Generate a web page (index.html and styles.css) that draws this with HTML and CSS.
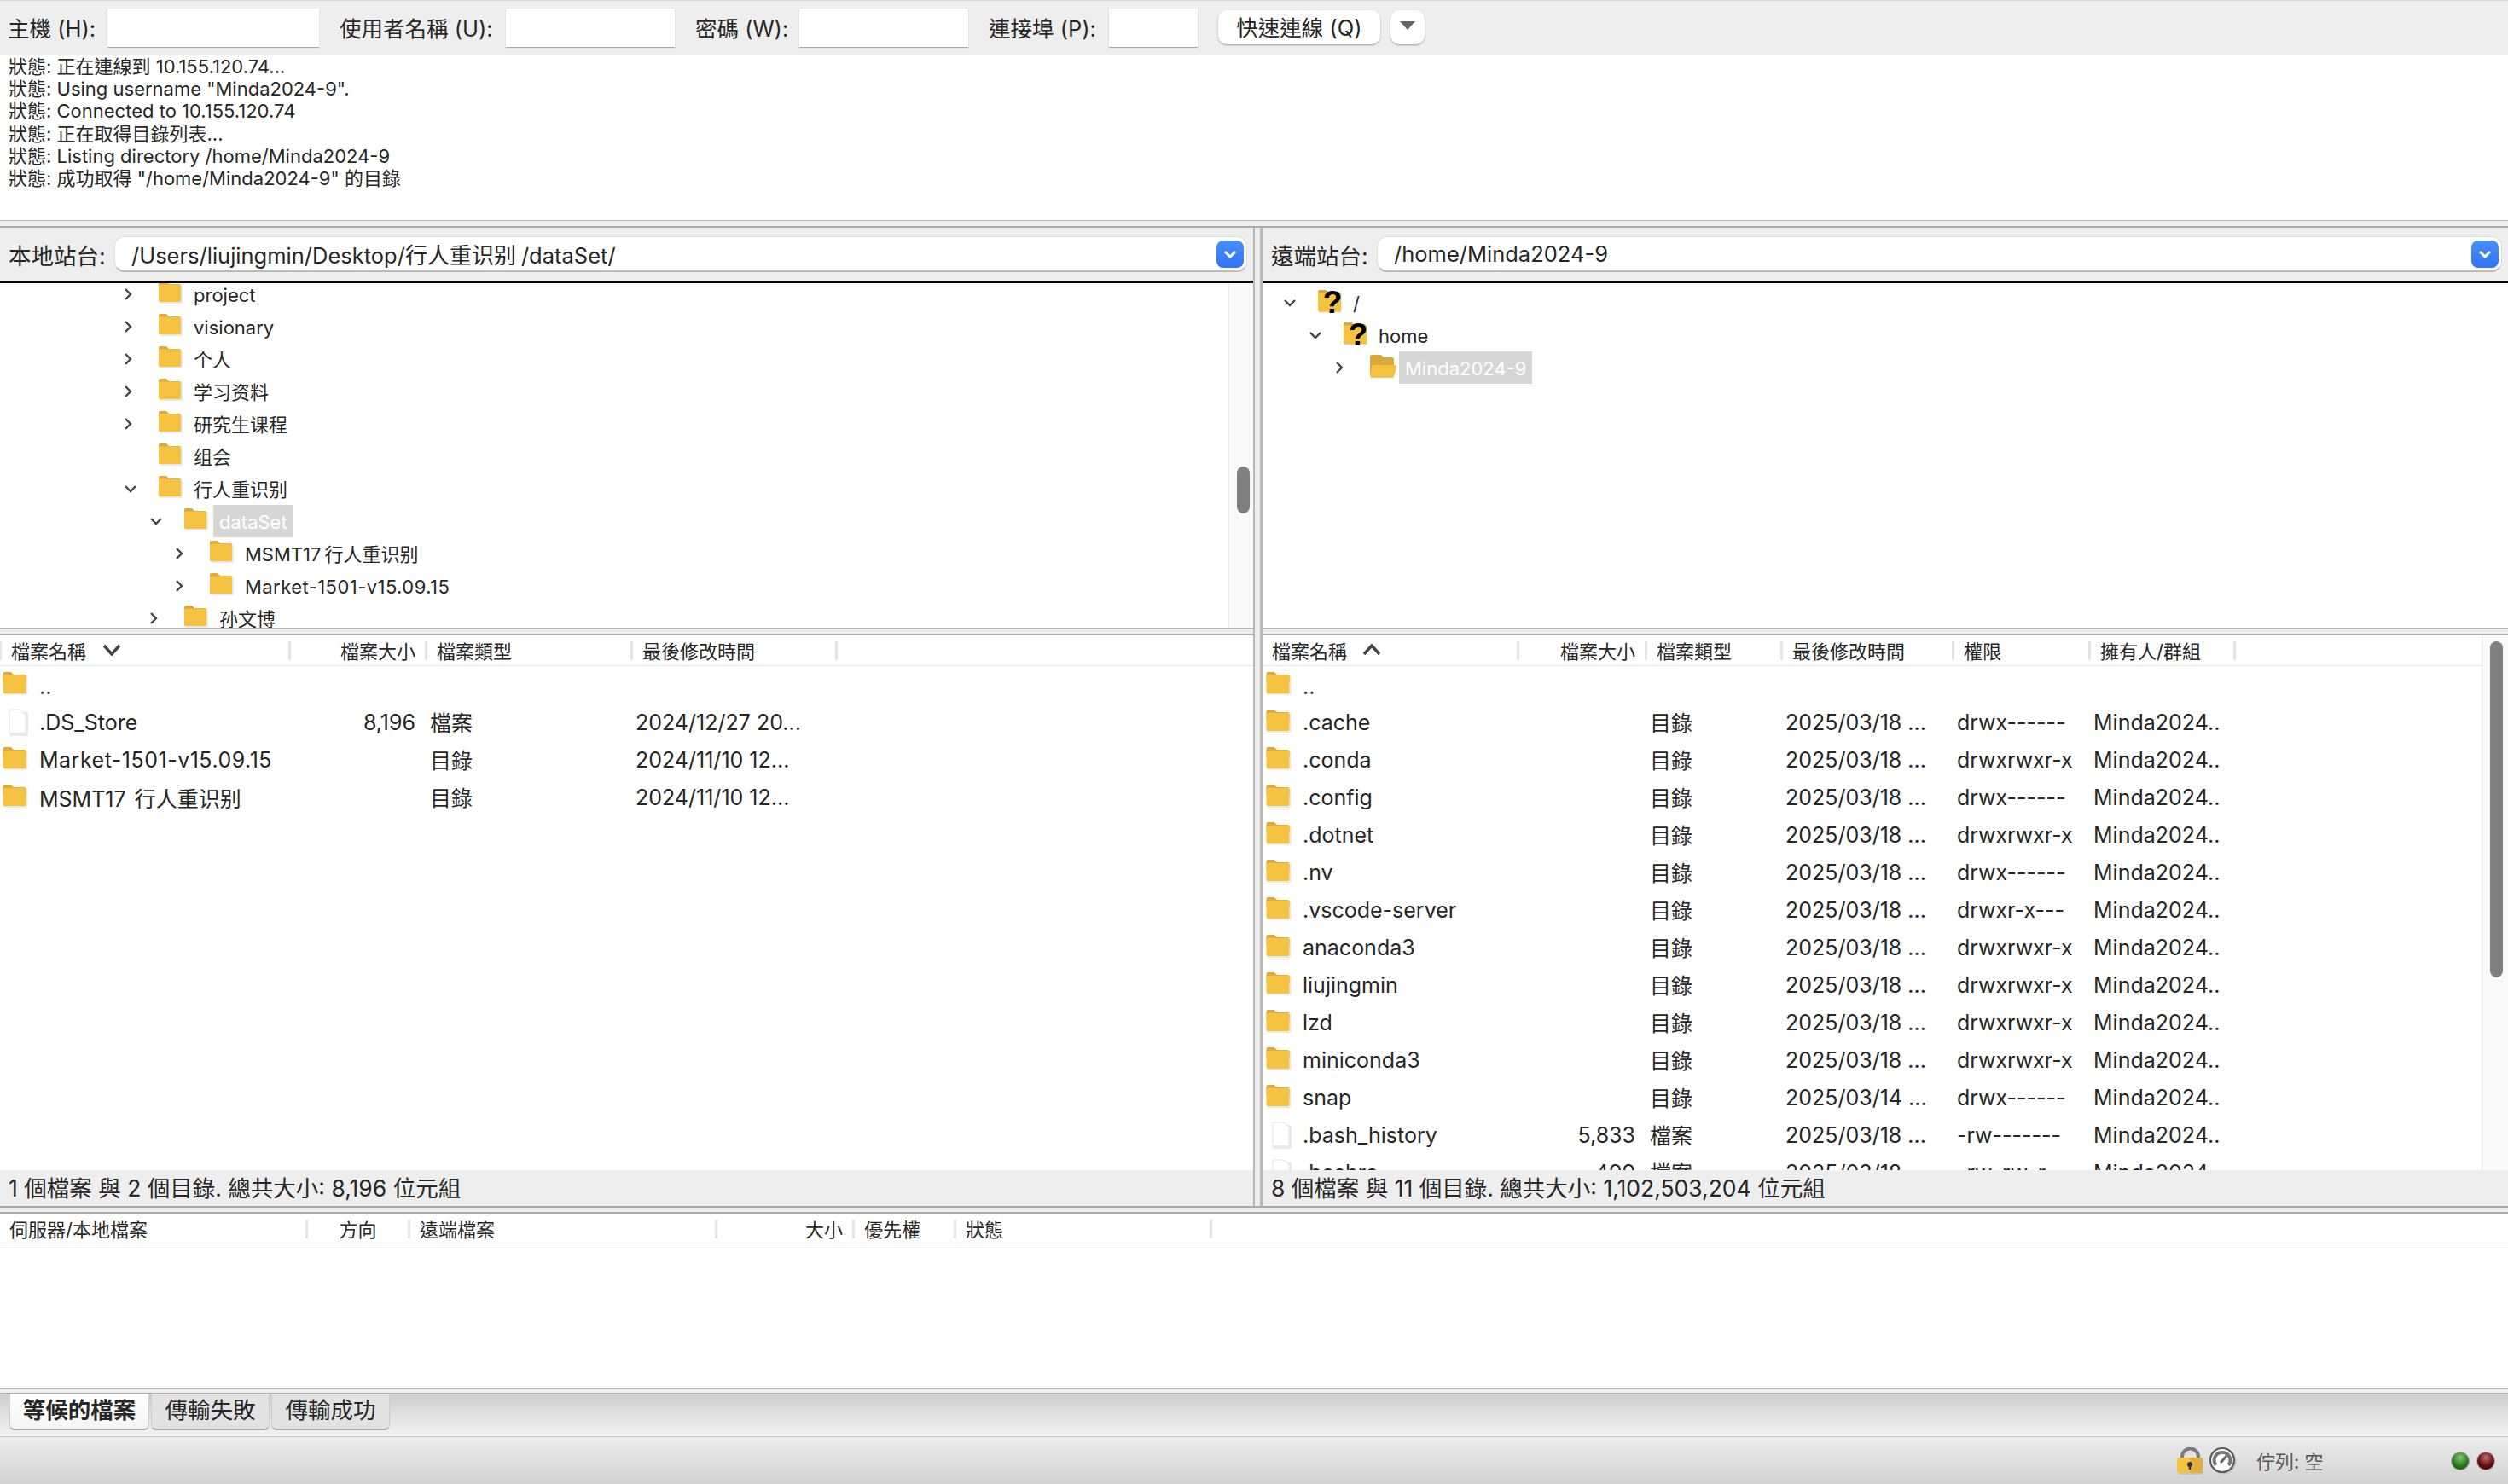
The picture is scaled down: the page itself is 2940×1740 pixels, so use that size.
FILE: index.html
```html
<!DOCTYPE html>
<html lang="zh-Hant">
<head>
    <meta charset="UTF-8">
    <title>FileZilla</title>
    <link rel="stylesheet" href="styles.css">
</head>
<body>
    <svg class="defs" width="0" height="0">
        <symbol id="folder" viewBox="0 0 28 26">
            <rect x="1" y="4" width="27" height="22" rx="2" fill="#e8e8e8"/>
            <path d="M0 2a2 2 0 0 1 2-2h7l3 3h12a2 2 0 0 1 2 2v6H0z" fill="#dcaa3c"/>
            <rect x="0" y="3.5" width="26" height="20.5" rx="1.5" fill="#f5c242"/>
        </symbol>
        <symbol id="folder-open" viewBox="0 0 32 27">
            <path d="M0 2a2 2 0 0 1 2-2h11l3 3h10a2 2 0 0 1 2 2v18H0z" fill="#dcaa3c"/>
            <path d="M2 14a2 2 0 0 1 2-2h26a1.500 1.500 0 0 1 1.500 2L28 25a2 2 0 0 1-2 2H2a2 2 0 0 1-2-2z" fill="#f5c242"/>
        </symbol>
        <symbol id="folder-unknown" viewBox="0 0 28 30">
            <rect x="1" y="4" width="27" height="24" rx="2" fill="#e8e8e8"/>
            <path d="M0 3a2 2 0 0 1 2-2h7l3 2h12a2 2 0 0 1 2 2v6H0z" fill="#dcaa3c"/>
            <rect x="0" y="4.500" width="27" height="22" rx="1.500" fill="#f5c242"/>
            <text x="17" y="28" class="unknown-mark">?</text>
        </symbol>
        <symbol id="file" viewBox="0 0 24 32">
            <rect x="2" y="4" width="22" height="28" rx="2" fill="#e8e8e8"/>
            <path d="M2 2.500A1.500 1.500 0 0 1 3.500 1H15l6 6v20a1.500 1.500 0 0 1-1.500 1.500h-16A1.500 1.500 0 0 1 2 27z" fill="#fff" stroke="#ececec" stroke-width="1.500"/>
        </symbol>
        <symbol id="chev-right" viewBox="0 0 10 16">
            <path d="M2 2l6 6-6 6" fill="none" stroke="#444" stroke-width="2.400"/>
        </symbol>
        <symbol id="chev-down" viewBox="0 0 16 10">
            <path d="M2 2l6 6 6-6" fill="none" stroke="#444" stroke-width="2.400"/>
        </symbol>
    </svg>

    <div class="toolbar">
        <label class="tb-label first">主機 (H):</label>
        <div class="tb-input"></div>
        <label class="tb-label">使用者名稱 (U):</label>
        <div class="tb-input"></div>
        <label class="tb-label">密碼 (W):</label>
        <div class="tb-input"></div>
        <label class="tb-label">連接埠 (P):</label>
        <div class="tb-input"></div>
        <div></div>
        <button class="tb-btn">快速連線 (Q)</button>
        <div></div>
        <button class="tb-btn"><span class="caret"></span></button>
    </div>

    <div class="log">
        <div>狀態: 正在連線到 10.155.120.74...</div>
        <div>狀態: Using username "Minda2024-9".</div>
        <div>狀態: Connected to 10.155.120.74</div>
        <div>狀態: 正在取得目錄列表...</div>
        <div>狀態: Listing directory /home/Minda2024-9</div>
        <div>狀態: 成功取得 "/home/Minda2024-9" 的目錄</div>
    </div>
    <div class="hsash"></div>

    <div class="panes">
        <div class="pane pane-local">
            <div class="sitebar">
                <span class="site-label">本地站台:</span>
                <div class="combo">
                    <span class="combo-text sc">/Users/liujingmin/Desktop/<span class="cjk-run">行人重识别</span>/dataSet/</span>
                    <span class="combo-btn"><svg width="16" height="10" viewBox="0 0 16 10"><path d="M2 2l6 6 6-6" fill="none" stroke="#fff" stroke-width="3"/></svg></span>
                </div>
            </div>
            <div class="tree">
                <div class="tree-rows scrolled sc">
                    <div class="tree-row lvl0"><svg class="chev-r"><use href="#chev-right"/></svg><svg class="tree-icon"><use href="#folder"/></svg><span class="tree-name">project</span></div>
                    <div class="tree-row lvl0"><svg class="chev-r"><use href="#chev-right"/></svg><svg class="tree-icon"><use href="#folder"/></svg><span class="tree-name">visionary</span></div>
                    <div class="tree-row lvl0"><svg class="chev-r"><use href="#chev-right"/></svg><svg class="tree-icon"><use href="#folder"/></svg><span class="tree-name">个人</span></div>
                    <div class="tree-row lvl0"><svg class="chev-r"><use href="#chev-right"/></svg><svg class="tree-icon"><use href="#folder"/></svg><span class="tree-name">学习资料</span></div>
                    <div class="tree-row lvl0"><svg class="chev-r"><use href="#chev-right"/></svg><svg class="tree-icon"><use href="#folder"/></svg><span class="tree-name">研究生课程</span></div>
                    <div class="tree-row lvl0 no-chev"><svg class="tree-icon"><use href="#folder"/></svg><span class="tree-name">组会</span></div>
                    <div class="tree-row lvl0"><svg class="chev-d"><use href="#chev-down"/></svg><svg class="tree-icon"><use href="#folder"/></svg><span class="tree-name">行人重识别</span></div>
                    <div class="tree-row lvl1"><svg class="chev-d"><use href="#chev-down"/></svg><svg class="tree-icon"><use href="#folder"/></svg><span class="tree-name selected">dataSet</span></div>
                    <div class="tree-row lvl2"><svg class="chev-r"><use href="#chev-right"/></svg><svg class="tree-icon"><use href="#folder"/></svg><span class="tree-name">MSMT17<span class="cjk-gap">行人重识别</span></span></div>
                    <div class="tree-row lvl2"><svg class="chev-r"><use href="#chev-right"/></svg><svg class="tree-icon"><use href="#folder"/></svg><span class="tree-name spaced">Market-1501-v15.09.15</span></div>
                    <div class="tree-row lvl1"><svg class="chev-r"><use href="#chev-right"/></svg><svg class="tree-icon"><use href="#folder"/></svg><span class="tree-name">孙文博</span></div>
                </div>
                <div class="scroll-track tree-track"><div class="scroll-thumb tree-thumb"></div></div>
            </div>
            <div class="hsash"></div>
            <div class="list">
                <div class="list-main">
                    <div class="list-head local-cols">
                        <div class="hcell first-col">檔案名稱<svg class="sort-icon" viewBox="0 0 24 14"><path d="M3 2l9 10 9-10" fill="none" stroke="#444" stroke-width="3.500"/></svg></div>
                        <div class="hcell right">檔案大小</div>
                        <div class="hcell">檔案類型</div>
                        <div class="hcell">最後修改時間</div>
                    </div>
                    <div class="list-rows">
                        <div class="list-row local-cols"><div class="cell name"><svg class="list-icon"><use href="#folder"/></svg><span class="dots">..</span></div></div>
                        <div class="list-row local-cols"><div class="cell name"><svg class="file-icon"><use href="#file"/></svg>.DS_Store</div><div class="cell right">8,196</div><div class="cell">檔案</div><div class="cell">2024/12/27 20...</div></div>
                        <div class="list-row local-cols"><div class="cell name"><svg class="list-icon"><use href="#folder"/></svg><span class="spaced">Market-1501-v15.09.15</span></div><div class="cell right"></div><div class="cell">目錄</div><div class="cell">2024/11/10 12...</div></div>
                        <div class="list-row local-cols"><div class="cell name"><svg class="list-icon"><use href="#folder"/></svg><span class="sc">MSMT17<span class="cjk-gap wide">行人重识别</span></span></div><div class="cell right"></div><div class="cell">目錄</div><div class="cell">2024/11/10 12...</div></div>
                    </div>
                </div>
            </div>
            <div class="pane-status">1 個檔案 與 2 個目錄. 總共大小: 8,196 位元組</div>
        </div>

        <div class="vsash"></div>

        <div class="pane pane-remote">
            <div class="sitebar">
                <span class="site-label">遠端站台:</span>
                <div class="combo">
                    <span class="combo-text">/home/Minda2024-9</span>
                    <span class="combo-btn"><svg width="16" height="10" viewBox="0 0 16 10"><path d="M2 2l6 6 6-6" fill="none" stroke="#fff" stroke-width="3"/></svg></span>
                </div>
            </div>
            <div class="tree">
                <div class="tree-rows">
                    <div class="tree-row lvl0"><svg class="chev-d"><use href="#chev-down"/></svg><svg class="tree-icon unknown"><use href="#folder-unknown"/></svg><span class="tree-name">/</span></div>
                    <div class="tree-row lvl1"><svg class="chev-d"><use href="#chev-down"/></svg><svg class="tree-icon unknown"><use href="#folder-unknown"/></svg><span class="tree-name">home</span></div>
                    <div class="tree-row lvl2"><svg class="chev-r"><use href="#chev-right"/></svg><svg class="tree-icon open"><use href="#folder-open"/></svg><span class="tree-name selected">Minda2024-9</span></div>
                </div>
            </div>
            <div class="hsash"></div>
            <div class="list">
                <div class="list-main">
                    <div class="list-head remote-cols">
                        <div class="hcell first-col">檔案名稱<svg class="sort-icon" viewBox="0 0 24 14"><path d="M3 12l9-10 9 10" fill="none" stroke="#444" stroke-width="3.500"/></svg></div>
                        <div class="hcell right">檔案大小</div>
                        <div class="hcell">檔案類型</div>
                        <div class="hcell">最後修改時間</div>
                        <div class="hcell">權限</div>
                        <div class="hcell">擁有人/群組</div>
                    </div>
                    <div class="list-rows">
                        <div class="list-row remote-cols"><div class="cell name"><svg class="list-icon"><use href="#folder"/></svg><span class="dots">..</span></div></div>
                        <div class="list-row remote-cols"><div class="cell name"><svg class="list-icon"><use href="#folder"/></svg>.cache</div><div class="cell right"></div><div class="cell">目錄</div><div class="cell">2025/03/18 ...</div><div class="cell">drwx------</div><div class="cell">Minda2024..</div></div>
                        <div class="list-row remote-cols"><div class="cell name"><svg class="list-icon"><use href="#folder"/></svg>.conda</div><div class="cell right"></div><div class="cell">目錄</div><div class="cell">2025/03/18 ...</div><div class="cell">drwxrwxr-x</div><div class="cell">Minda2024..</div></div>
                        <div class="list-row remote-cols"><div class="cell name"><svg class="list-icon"><use href="#folder"/></svg>.config</div><div class="cell right"></div><div class="cell">目錄</div><div class="cell">2025/03/18 ...</div><div class="cell">drwx------</div><div class="cell">Minda2024..</div></div>
                        <div class="list-row remote-cols"><div class="cell name"><svg class="list-icon"><use href="#folder"/></svg>.dotnet</div><div class="cell right"></div><div class="cell">目錄</div><div class="cell">2025/03/18 ...</div><div class="cell">drwxrwxr-x</div><div class="cell">Minda2024..</div></div>
                        <div class="list-row remote-cols"><div class="cell name"><svg class="list-icon"><use href="#folder"/></svg>.nv</div><div class="cell right"></div><div class="cell">目錄</div><div class="cell">2025/03/18 ...</div><div class="cell">drwx------</div><div class="cell">Minda2024..</div></div>
                        <div class="list-row remote-cols"><div class="cell name"><svg class="list-icon"><use href="#folder"/></svg>.vscode-server</div><div class="cell right"></div><div class="cell">目錄</div><div class="cell">2025/03/18 ...</div><div class="cell">drwxr-x---</div><div class="cell">Minda2024..</div></div>
                        <div class="list-row remote-cols"><div class="cell name"><svg class="list-icon"><use href="#folder"/></svg>anaconda3</div><div class="cell right"></div><div class="cell">目錄</div><div class="cell">2025/03/18 ...</div><div class="cell">drwxrwxr-x</div><div class="cell">Minda2024..</div></div>
                        <div class="list-row remote-cols"><div class="cell name"><svg class="list-icon"><use href="#folder"/></svg>liujingmin</div><div class="cell right"></div><div class="cell">目錄</div><div class="cell">2025/03/18 ...</div><div class="cell">drwxrwxr-x</div><div class="cell">Minda2024..</div></div>
                        <div class="list-row remote-cols"><div class="cell name"><svg class="list-icon"><use href="#folder"/></svg>lzd</div><div class="cell right"></div><div class="cell">目錄</div><div class="cell">2025/03/18 ...</div><div class="cell">drwxrwxr-x</div><div class="cell">Minda2024..</div></div>
                        <div class="list-row remote-cols"><div class="cell name"><svg class="list-icon"><use href="#folder"/></svg>miniconda3</div><div class="cell right"></div><div class="cell">目錄</div><div class="cell">2025/03/18 ...</div><div class="cell">drwxrwxr-x</div><div class="cell">Minda2024..</div></div>
                        <div class="list-row remote-cols"><div class="cell name"><svg class="list-icon"><use href="#folder"/></svg>snap</div><div class="cell right"></div><div class="cell">目錄</div><div class="cell">2025/03/14 ...</div><div class="cell">drwx------</div><div class="cell">Minda2024..</div></div>
                        <div class="list-row remote-cols"><div class="cell name"><svg class="file-icon"><use href="#file"/></svg>.bash_history</div><div class="cell right">5,833</div><div class="cell">檔案</div><div class="cell">2025/03/18 ...</div><div class="cell">-rw-------</div><div class="cell">Minda2024..</div></div>
                        <div class="list-row remote-cols"><div class="cell name"><svg class="file-icon"><use href="#file"/></svg>.bashrc</div><div class="cell right">499</div><div class="cell">檔案</div><div class="cell">2025/03/18 ...</div><div class="cell">-rw-rw-r--</div><div class="cell">Minda2024..</div></div>
                    </div>
                </div>
                <div class="scroll-track list-track"><div class="scroll-thumb list-thumb"></div></div>
            </div>
            <div class="pane-status">8 個檔案 與 11 個目錄. 總共大小: 1,102,503,204 位元組</div>
        </div>
    </div>
    <div class="hsash thick-top"></div>

    <div class="queue">
        <div class="list-head queue-cols">
            <div class="hcell">伺服器/本地檔案</div>
            <div class="hcell center">方向</div>
            <div class="hcell">遠端檔案</div>
            <div class="hcell right">大小</div>
            <div class="hcell">優先權</div>
            <div class="hcell">狀態</div>
        </div>
    </div>
    <div class="hsash short"></div>

    <div class="tabs">
        <div class="tab active">等候的檔案</div>
        <div class="tab">傳輸失敗</div>
        <div class="tab">傳輸成功</div>
    </div>

    <div class="statusbar">
        <svg class="lock" viewBox="0 0 31 32">
            <rect x="2" y="14" width="29" height="18" rx="2" fill="#c4c4c4"/>
            <path d="M6 14V11a9.500 9.500 0 0 1 19 0v3" fill="none" stroke="#7b7b7b" stroke-width="4"/>
            <rect x="0" y="12" width="30" height="18" rx="2" fill="#f5c242"/>
            <path d="M15 12h13a2 2 0 0 1 2 2v14a2 2 0 0 1-2 2H15z" fill="#e3ae3f"/>
            <circle cx="15" cy="20" r="3" fill="#333"/>
            <rect x="13.800" y="20" width="2.400" height="6" fill="#333"/>
        </svg>
        <svg class="gauge" viewBox="0 0 32 32">
            <circle cx="16.500" cy="16.500" r="15" fill="#c4c4c4"/>
            <circle cx="15" cy="15" r="14" fill="#fff" stroke="#5c5c5c" stroke-width="2.200"/>
            <path d="M7.500 21A9.500 9.500 0 1 1 22.500 21" fill="none" stroke="#777" stroke-width="4"/>
            <path d="M13 18l7-8" stroke="#666" stroke-width="3" fill="none"/>
        </svg>
        <span class="queue-state">佇列: 空</span>
        <span class="led led-green"></span>
        <span class="led led-red"></span>
    </div>
</body>
</html>
```

FILE: styles.css
```css
* {
  box-sizing: border-box;
}

body {
  margin: 0;
  width: 2940px;
  height: 1740px;
  overflow: hidden;
  background: #fff;
  color: #262626;
  font-family: Inter, "Noto Sans CJK TC", sans-serif;
  font-size: 25px;
}

.sc {
  font-family: Inter, "Noto Sans CJK SC", sans-serif;
}

.defs {
  position: absolute;
}

.unknown-mark {
  font-family: "Liberation Sans", sans-serif;
  font-size: 37px;
  font-weight: bold;
  fill: #000;
  text-anchor: middle;
}

.cjk-run {
  margin-right: 6px;
  font-size: 26px;
}

.cjk-gap {
  margin-left: 4px;
}

.cjk-gap.wide {
  margin-left: 10px;
}

.spaced {
  letter-spacing: 0.02em;
}

/* top bar */
.toolbar {
  display: grid;
  grid-template-columns: 126px 248px 219px 198px 146px 198px 165px 104px 24px 190px 12px 40px;
  align-items: center;
  height: 64px;
  background: #eee;
  border-top: 1px solid #d8d8d8;
  font-size: 25.500px;
}

.tb-label {
  padding: 0 0 3px 24px;
  white-space: nowrap;
}

.tb-label.first {
  padding-left: 9px;
}

.tb-input {
  height: 45px;
  margin-top: -1px;
  background: #fff;
  box-shadow: 0 1px 1px #aaa;
}

.tb-btn {
  display: flex;
  align-items: center;
  justify-content: center;
  height: 40px;
  padding: 0 0 3px;
  margin-top: -2px;
  border: none;
  border-radius: 10px;
  background: #fff;
  color: inherit;
  font: inherit;
  box-shadow: 0 1px 2px rgba(0, 0, 0, 0.35);
}

.caret {
  width: 0;
  height: 0;
  border-left: 9px solid transparent;
  border-right: 9px solid transparent;
  border-top: 10px solid #666;
}

.log {
  height: 194px;
  padding: 1px 0 0 10px;
  font-size: 22px;
  line-height: 26.2px;
}

.hsash {
  height: 9px;
  flex: none;
  background: #eee;
  border-top: 1px solid #b4b4b4;
  border-bottom: 2px solid #aaa;
}

.hsash.thick-top {
  border-top: 2px solid #aaa;
}

.hsash.short {
  height: 6px;
  border-bottom-width: 1px;
}

/* the two site panes */
.panes {
  display: flex;
  height: 1147px;
}

.pane {
  display: flex;
  flex-direction: column;
  min-width: 0;
}

.pane-local {
  width: 1469px;
}

.pane-remote {
  flex: 1;
}

.vsash {
  width: 11px;
  background: #eee;
  border-left: 2px solid #b8b8b8;
  border-right: 3px solid #b8b8b8;
}

.sitebar {
  display: flex;
  align-items: center;
  height: 65px;
  flex: none;
  padding: 0 7px 0 10px;
  background: #eee;
  border-bottom: 3px solid #000;
}

.site-label {
  width: 124px;
  padding-top: 1px;
  font-size: 26.500px;
  white-space: nowrap;
}

.combo {
  display: flex;
  align-items: center;
  justify-content: space-between;
  flex: 1;
  height: 42px;
  padding: 0 3px 0 19px;
  background: #fff;
  border: 1px solid #ddd;
  border-bottom: 2px solid #bbb;
  border-radius: 12px;
}

.combo-text {
  font-size: 25.500px;
}

.combo-btn {
  display: flex;
  align-items: center;
  justify-content: center;
  width: 32px;
  height: 32px;
  border-radius: 8px;
  background: linear-gradient(#4a8ffb, #2f73f6);
}

.tree {
  display: flex;
  height: 404px;
  flex: none;
  overflow: hidden;
}

.tree-rows {
  flex: 1;
  min-width: 0;
  padding-top: 4px;
  font-size: 22px;
}

.tree-rows.scrolled {
  padding-top: 0;
  margin-top: -6px;
}

.tree-row {
  display: flex;
  align-items: flex-start;
  height: 38px;
  white-space: nowrap;
}

.lvl0 { padding-left: 24px; }
.lvl1 { padding-left: 54px; }
.lvl2 { padding-left: 85px; }

.pane-local .lvl0 { padding-left: 145px; }
.pane-local .lvl1 { padding-left: 175px; }
.pane-local .lvl2 { padding-left: 205px; }

.chev-r {
  width: 10px;
  height: 16px;
  margin: 11px 31px 0 0;
  flex: none;
}

.chev-d {
  width: 16px;
  height: 10px;
  margin: 14px 25px 0 0;
  flex: none;
}

.no-chev {
  margin-left: 41px;
}

.tree-icon {
  width: 28px;
  height: 26px;
  margin: 4px 6px 0 0;
  flex: none;
}

.tree-icon.unknown {
  height: 30px;
  margin-top: 3px;
}

.tree-icon.open {
  width: 32px;
  height: 27px;
  margin: 4px 2px 0 0;
}

.tree-name {
  height: 38px;
  padding: 0 7px;
  line-height: 40px;
}

.tree-name.selected {
  background: #d6d6d6;
  color: #fff;
}

.scroll-track {
  flex: none;
  background: #fafafa;
  border-left: 1px solid #e8e8e8;
}

.scroll-thumb {
  width: 15px;
  background: #808080;
  border-radius: 8px;
}

.tree-track {
  width: 29px;
  padding: 215px 0 0 9px;
}

.tree-thumb {
  height: 55px;
}

.list-track {
  width: 31px;
  padding: 7px 0 0 9px;
}

.list-thumb {
  height: 394px;
}

.list {
  display: flex;
  flex: 1;
  min-height: 0;
  overflow: hidden;
}

.list-main {
  flex: 1;
  min-width: 0;
}

.list-head {
  display: grid;
  height: 36px;
  padding-top: 7px;
  font-size: 22px;
  border-bottom: 1px solid #e5e5e5;
}

.hcell {
  display: flex;
  height: 22px;
  padding-left: 11px;
  line-height: 24px;
  border-right: 3px solid #e5e5e5;
  white-space: nowrap;
}

.hcell.right {
  justify-content: flex-end;
  padding-right: 11px;
}

.hcell.center {
  justify-content: center;
  padding-left: 0;
}

.sort-icon {
  width: 24px;
  height: 14px;
  margin: 3px 0 0 18px;
  flex: none;
}

.pane-remote .sort-icon {
  margin-left: 17px;
}

.local-cols {
  grid-template-columns: 341px 160px 241px 240px;
}

.remote-cols {
  grid-template-columns: 301px 150px 159px 201px 160px 170px;
}

.queue-cols {
  grid-template-columns: 361px 120px 360px 161px 119px 300px;
  height: 35px;
}

.pane-local .first-col {
  border-left: 2px solid #e5e5e5;
  padding-left: 11px;
}

.list-row {
  display: grid;
  height: 44px;
  align-items: center;
}

.cell {
  padding-left: 3px;
  white-space: nowrap;
}

.list-row .cell:nth-child(3) {
  padding-bottom: 3px;
}

.cell.right {
  padding-left: 0;
  padding-right: 14px;
  text-align: right;
}

.cell.name {
  display: flex;
  align-items: center;
  padding-left: 3px;
}

.pane-remote .cell.name {
  padding-left: 4px;
}

.list-icon {
  width: 30px;
  height: 27px;
  margin: -3px 13px 0 0;
  flex: none;
}

.file-icon {
  width: 24px;
  height: 32px;
  margin: 0 13px 0 6px;
  flex: none;
}

.dots {
  padding-top: 3px;
}

.pane-status {
  height: 42px;
  flex: none;
  padding-left: 10px;
  font-size: 26.500px;
  line-height: 42px;
  background: #eee;
}

/* transfer queue */
.queue {
  height: 205px;
}

.tabs {
  display: flex;
  gap: 2px;
  height: 51px;
  padding-left: 11px;
  background: linear-gradient(#cdcdcd, #f3f3f3);
  border-bottom: 1px solid #c8c8c8;
}

.tab {
  width: 139px;
  height: 43px;
  font-size: 26.500px;
  line-height: 38px;
  text-align: center;
  background: #e2e2e2;
  border: 1px solid #ccc;
  border-top: none;
  border-bottom: 2px solid #aaa;
  border-radius: 0 0 6px 6px;
}

.tab.active {
  width: 164px;
  font-weight: bold;
  background: linear-gradient(#fff, #f4f4f4);
}

.statusbar {
  display: flex;
  align-items: center;
  height: 55px;
  padding-left: 2552px;
  background: linear-gradient(#ececec, #d2d2d2);
}

.lock {
  width: 31px;
  height: 32px;
  margin-right: 7px;
}

.gauge {
  width: 32px;
  height: 32px;
  margin-right: 23px;
}

.queue-state {
  width: 228px;
  padding-bottom: 2px;
  font-size: 22px;
  color: #555;
}

.led {
  width: 22px;
  height: 22px;
  margin-right: 8px;
  border-radius: 50%;
  border: 1px solid #aaa;
}

.led-green {
  background: radial-gradient(circle at 50% 30%, #8cc67c, #2c7a1c 55%, #134a08);
}

.led-red {
  background: radial-gradient(circle at 50% 30%, #b47070, #6a0c0c 55%, #3c0000);
}
```
